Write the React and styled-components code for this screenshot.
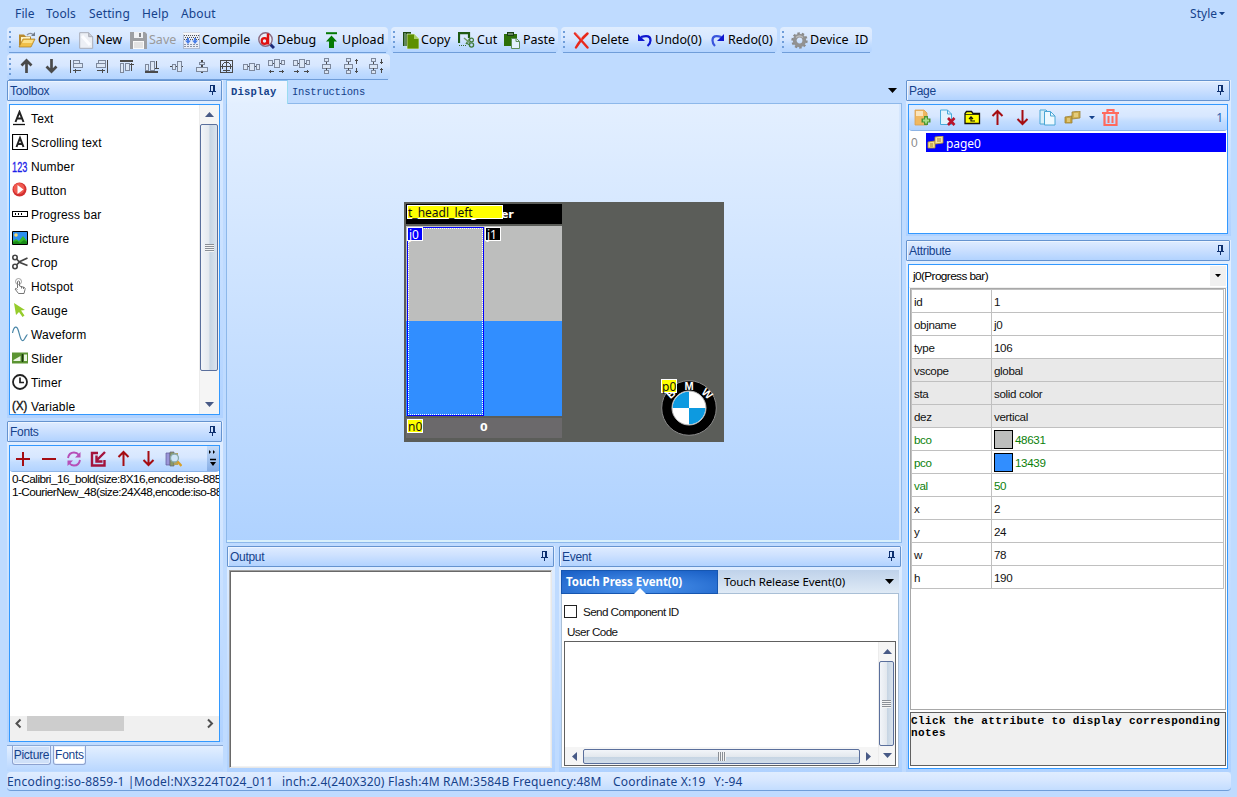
import React from "react";
import styled, { createGlobalStyle } from "styled-components";

const Global = createGlobalStyle`
  * { box-sizing: border-box; }
  body { margin: 0; background: #bfdbff; overflow: hidden; }
  svg { display: block; flex: none; }
`;

const UI = `"Noto Sans", "Open Sans", sans-serif`;
const SANS = `"Liberation Sans", Arial, sans-serif`;
const MONO = `"Liberation Mono", "Courier New", monospace`;
const strip = "linear-gradient(#e0edff, #d7e7ff 45%, #c3ddff 65%, #b2d3ff)";

/* ---------- frame ---------- */
const Window = styled.div`
  width: 1237px; height: 797px; background: #bfdbff;
  display: flex; flex-direction: column; white-space: nowrap;
`;
const MenuBar = styled.div`
  height: 27px; padding: 0 12px 0 15px; display: flex; align-items: center;
  font: 12px/27px ${UI}; color: #15428b; letter-spacing: 0.15px;
`;
const MenuItem = styled.span`width: ${(p) => p.$w}px;`;
const StyleMenu = styled.span`margin-left: auto; display: flex; align-items: center; gap: 2px; letter-spacing: 0;`;
const BarRow = styled.div`height: ${(p) => p.$h}px; display: flex; padding-left: 7px; gap: 3px;`;
const Bar = styled.div`
  width: ${(p) => p.$w}px; height: 26px; border-radius: 4px; background: ${strip};
  display: flex; align-items: center; padding-left: 2px; position: relative;
  &::after { content: ""; position: absolute; left: 2px; right: 2px; bottom: 0; height: 1px; background: #6f9dd9; }
`;
const Grip = styled.i`
  width: 2px; height: 18px; margin-right: ${(p) => p.$after}px; flex: none;
  background: repeating-linear-gradient(#6f9dd9 0 2px, transparent 2px 5px);
`;
const Tool = styled.div`
  width: ${(p) => p.$w}px; flex: none; display: flex; align-items: center; height: 24px;
  font: 12.5px/24px ${UI}; color: ${(p) => (p.$off ? "#9a9a9a" : "#000")};
`;
const IconSlot = styled.span`width: ${(p) => p.$w}px; flex: none;`;
const AlignCell = styled.span`width: 25px; flex: none; display: flex; justify-content: center; margin-bottom: 2px;`;

const Main = styled.div`height: 692px; display: flex; padding-left: 7px;`;
const Column = styled.div`
  width: ${(p) => p.$w}px; margin-right: ${(p) => p.$mr || 0}px; flex: none;
  display: flex; flex-direction: column;
`;
const Panel = styled.section`
  height: ${(p) => p.$h}px; margin-bottom: ${(p) => p.$mb || 0}px; flex: none; width: ${(p) => (p.$w ? p.$w + "px" : "auto")};
  background: linear-gradient(#e3efff, #b0d2ff); display: flex; flex-direction: column;
`;
const Header = styled.header`
  height: 21px; margin-right: 1px; flex: none; border: 1px solid #6593cf; border-radius: 1px;
  background: linear-gradient(#dfecff, #cfe2ff 40%, #b2d3ff); box-shadow: inset 1px 1px #eef5ff;
  display: flex; align-items: center; justify-content: space-between; padding: 2px 4px 0 2px;
  font: 12px/17px ${SANS}; color: #15428b; letter-spacing: -0.3px;
`;
const PinSlot = styled.span`margin-bottom: 3px;`;
const Frame = styled.div`
  margin: 3px 3px 0 2px; height: ${(p) => p.$h}px; flex: none;
  border: 1px solid #3399ff; background: #fff; display: flex; flex-direction: ${(p) => (p.$row ? "row" : "column")};
  overflow: hidden;
`;

/* ---------- toolbox ---------- */
const ToolList = styled.div`flex: 1; padding: 2px 0 0 2px; overflow: hidden;`;
const ToolEntry = styled.div`
  height: 24px; display: flex; align-items: center; gap: 3px; font: 12px/24px ${SANS}; color: #000; letter-spacing: 0.14px;
`;
const EntryIcon = styled.span`width: 16px; margin-bottom: 3px;`;

/* ---------- scrollbars ---------- */
const VScroll = styled.div`
  width: ${(p) => p.$w}px; flex: none; background: #f5f5f5; border-left: 1px solid #ececec;
  display: flex; flex-direction: column; padding-bottom: 7px;
`;
const UpSlot = styled.span`height: 19px; flex: none; display: flex; justify-content: center; padding-top: 7px;`;
const DownSlot = styled.span`margin-top: auto; display: flex; justify-content: center;`;
const VThumb = styled.div`
  margin-right: 1px; height: ${(p) => p.$h}px; border: 1px solid #5a6f9c; border-radius: 2px; flex: none;
  background: linear-gradient(90deg, #f2f5f9, #e3e8ee 52%, #c5d4e3 54%, #dbe4ee);
  display: flex; align-items: center; justify-content: center;
`;
const HScroll = styled.div`
  height: 18px; flex: none; background: #f5f5f5; display: flex; align-items: center; gap: 6px; padding-left: 7px;
`;
const HThumb = styled.div`
  width: 277px; height: 15px; border: 1px solid #5a6f9c; border-radius: 2px;
  background: linear-gradient(#f2f5f9, #e3e8ee 52%, #c5d4e3 54%, #d3deea);
  display: flex; align-items: center; justify-content: center;
`;
const Lines = styled.i`
  width: ${(p) => (p.$v ? 8 : 9)}px; height: ${(p) => (p.$v ? 9 : 8)}px;
  background: repeating-linear-gradient(${(p) => (p.$v ? "90deg" : "180deg")}, #8a8f96 0 1px, #f4f4f4 1px 2px);
`;

/* ---------- fonts ---------- */
const PanelBar = styled.div`
  height: 26px; flex: none; background: ${strip}; border-bottom: 1px solid #8db4e6; display: flex; align-items: center;
  padding-left: ${(p) => p.$pl || 0}px; border-radius: 0 0 3px 3px;
`;
const Cell = styled.span`width: ${(p) => p.$w || 25}px; flex: none; display: flex; justify-content: center;`;
const Overflow = styled.span`
  margin-left: auto; width: 12px; height: 25px; background: linear-gradient(#c6dcf8, #86aee6); display: flex; align-items: center; justify-content: center;
`;
const FontList = styled.div`
  flex: 1; padding: 1px 0 0 2px; font: 11.8px/13px ${SANS}; letter-spacing: -0.56px; color: #000; overflow: hidden;
`;
const FlatScroll = styled.div`height: 25px; flex: none; background: #f0f0f0; display: flex; padding: 0 4px;`;
const FlatThumb = styled.div`width: 97px; height: 15px; background: #cdcdcd; margin: 0 82px 0 5px;`;
const TabStrip = styled.div`
  height: 26px; border-top: 1px solid #8aa9d6; background: linear-gradient(#e3efff, #b9d7ff); display: flex; gap: 2px; padding-left: 5px; margin-top: 3px;
`;
const BottomTab = styled.div`
  width: ${(p) => p.$w}px; height: 19px; border: 1px solid #8da2cf; border-top: 0; border-radius: 0 0 3px 3px; box-shadow: inset 0 0 0 1px #e6f0ff;
  background: ${(p) => (p.$on ? "#fff" : "#cfe0f8")}; font: 12px/19px ${SANS}; color: #15428b; text-align: center; letter-spacing: -0.25px;
`;

/* ---------- document ---------- */
const DocTabs = styled.div`height: 24px; flex: none; display: flex; align-items: stretch; font: 10.5px/22px ${MONO}; color: #15428b;`;
const DocTab = styled.div`
  border-left: 1px solid #8cc0f0; border-top: 1px solid #8cc0f0; border-right: 1px solid #9adcf0;
  width: 62px; padding-left: 4px; font-weight: 700; letter-spacing: 0.2px; background: linear-gradient(#f0f6ff, #e3efff);
`;
const DocTabIdle = styled.div`
  flex: 1; padding: 1px 5px 0 4px; border-bottom: 1px solid #8db8ea; letter-spacing: -0.22px; display: flex; justify-content: space-between; line-height: 23px;
`;
const DropMark = styled.span`align-self: center; margin-top: -3px;`;
const Doc = styled.div`
  height: 439px; width: 676px; flex: none; border: 1px solid #8db8ea; border-top: 0; box-shadow: inset 0 -2px #d9f0fb, inset -2px 0 #d5e6fd;
  background: linear-gradient(#e3efff, #afd2ff); padding: 98px 0 0 177px;
`;
const Screen = styled.div`position: relative; width: 320px; height: 240px; background: #5b5d59; overflow: hidden;`;
const Part = styled.div`
  position: absolute; left: ${(p) => p.$x}px; top: ${(p) => p.$y}px; width: ${(p) => p.$w}px; height: ${(p) => p.$h}px; background: ${(p) => p.$bg};
`;
const Value = styled(Part)`
  font: 700 11px/${(p) => p.$h}px "DejaVu Sans", sans-serif; color: #fff; letter-spacing: -0.25px; padding-left: ${(p) => p.$pl}px;
`;
const Tag = styled(Part)`
  border: 1px solid #fff; color: ${(p) => p.$c || "#111"}; font: 12px/13px ${UI}; letter-spacing: 0; padding-left: ${(p) => p.$pl || 0}px;
`;
const Selection = styled(Part)`
  border: 1px solid #0000ff;
  &::after { content: ""; position: absolute; inset: 0; border: 1px dotted #fff; }
`;
const Logo = styled.div`position: absolute; left: 257px; top: 177px;`;

/* ---------- output and events ---------- */
const BottomRow = styled.div`display: flex; gap: 4px; margin-top: 3px; padding-left: 1px; height: 226px;`;
const OutputBox = styled.div`
  margin: 3px 3px 0 2px; height: 198px; background: #fff; border: 1px solid; border-color: #a0a0a0 #e8e8e8 #e8e8e8 #a0a0a0;
  box-shadow: inset 1px 1px #696969, inset -1px -1px #f2f2f2;
`;
const EventBox = styled.div`margin: 3px 3px 0 2px; height: 198px; display: flex; flex-direction: column;`;
const EventTabs = styled.div`
  height: 24px; flex: none; display: flex; background: linear-gradient(#bfd2ea, #dfeaf6); border-bottom: 1px solid #a9bfd6; font: 11.5px/24px ${UI};
  color: #000; letter-spacing: -0.1px;
`;
const EventTab = styled.div`
  width: 157px; height: 24px; background: radial-gradient(ellipse 70% 90% at 50% 75%, #4f97ef, #1c62c8); border: 1px solid #1656b0;
  font-weight: 700; line-height: 22px; color: #fff; padding-left: 4px; letter-spacing: -0.05px; position: relative;
  &::after { content: ""; position: absolute; left: 72px; bottom: -1px; border: 6px solid transparent; border-bottom-color: #fff; border-top: 0; }
`;
const EventTabIdle = styled.div`flex: 1; padding: 0 5px 0 6px; display: flex; justify-content: space-between; align-items: center;`;
const EventBody = styled.div`
  flex: 1; background: #fff; border: 1px solid #a9bfd6; border-top: 0; padding: 8px 2px 0 2px; font: 11.7px/17px ${SANS}; color: #111; letter-spacing: -0.6px;
`;
const CheckLine = styled.label`display: flex; align-items: center; height: 18px; gap: 6px;`;
const Check = styled.i`width: 13px; height: 13px; border: 1px solid #222; background: #fff;`;
const CodeLabel = styled.div`height: 21px; padding: 3px 0 0 3px;`;
const CodeBox = styled.div`width: 332px; height: 125px; border: 1px solid #606060; display: flex; background: #fff;`;
const CodeMain = styled.div`flex: 1; min-width: 0; display: flex; flex-direction: column; justify-content: flex-end;`;

/* ---------- page ---------- */
const Count = styled.span`margin-left: auto; padding-right: 4px; font: 12px ${UI}; color: #2d62b0;`;
const PageRow = styled.div`
  height: 19px; margin: 2px 1px 0 0; flex: none; display: flex; align-items: center; font: 12px/21px ${SANS}; color: #8a8a8a;
`;
const PageIndex = styled.span`width: 17px; padding: 2px 0 0 2px;`;
const PageName = styled.span`
  flex: 1; height: 19px; background: #0000ff; color: #fff; display: flex; align-items: center; gap: 2px; padding-left: 1px; font: 12px/19px ${UI};
`;
const PageText = styled.span`padding-top: 2px; letter-spacing: -0.05px;`;

/* ---------- attributes ---------- */
const Combo = styled.div`
  height: 23px; flex: none; display: flex; justify-content: space-between; padding: 1px 1px 2px 4px; font: 11.8px/21px ${SANS}; letter-spacing: -0.6px; color: #000;
  border-bottom: 1px solid #f0f0f0;
`;
const ComboButton = styled.span`width: 16px; height: 20px; background: #f0f0f0; display: flex; align-items: center; justify-content: center;`;
const Sheet = styled.div`height: 422px; flex: none; margin: 0 1px; border: 1px solid #a8a8a8; background: #fff;`;
const Grid = styled.div`width: 313px; border: 1px solid #c0c0c0; border-bottom: 0;`;
const AttrRow = styled.div`
  height: 23px; display: grid; grid-template-columns: 80px 1fr; border-bottom: 1px solid #c0c0c0;
  background: ${(p) => (p.$kind === "fixed" ? "#e9e9e9" : "#fff")}; color: ${(p) => (p.$kind === "live" ? "#0b7f0b" : "#111")};
  font: 11.6px/23px ${SANS}; letter-spacing: -0.35px;
`;
const Key = styled.div`padding-left: 2px; border-right: 1px solid #c0c0c0;`;
const Val = styled.div`padding-left: 2px; display: flex; align-items: center; gap: 2px;`;
const Swatch = styled.i`width: 19px; height: 19px; border: 1px solid #000; background: ${(p) => p.$c};`;
const Note = styled.div`
  margin: 2px 1px 0; height: 54px; border: 1px solid #606060; background: #f0f0f0; font: 700 11px/12px ${MONO}; letter-spacing: 0.43px;
  color: #000; padding: 2px 0 0 0; white-space: normal;
`;
const Status = styled.footer`
  margin: 0 6px 0 7px; height: 19px; border-radius: 4px; background: linear-gradient(#e0edff, #d7e7ff 45%, #c3ddff); border-bottom: 1px solid #6f9dd9;
  font: 12px/19px ${UI}; color: #15428b; display: flex; letter-spacing: 0.2px;
`;
const StatusPart = styled.span`width: ${(p) => p.$w}px;`;

/* ---------- drawings ---------- */
const Ico = ({ w = 16, h = 16, children, ...r }) => (
  <svg width={w} height={h} viewBox={`0 0 ${w} ${h}`} fill="none" {...r}>{children}</svg>
);
const Pin = () => (
  <PinSlot>
    <Ico w={8} h={10} shapeRendering="crispEdges"><path d="M1 0h5v6h-5zM2 1v5h2V1zM0 6h7v1H0zM3 7h1v3H3z" fill="#0d2f6e" fillRule="evenodd" /></Ico>
  </PinSlot>
);
const Tri = ({ d = "down", c = "#485a86", s = 9 }) => {
  const p = { down: "M0 0h9L4.5 5z", up: "M0 5h9L4.5 0z", left: "M5 0v9L0 4.5z", right: "M0 0v9L5 4.5z" }[d];
  const v = d === "left" || d === "right";
  return <svg width={v ? (s * 5) / 9 : s} height={v ? s : (s * 5) / 9} viewBox={v ? "0 0 5 9" : "0 0 9 5"}><path d={p} fill={c} /></svg>;
};
const OpenIcon = () => (
  <Ico w={18}>
    <path d="M1 2.500h5l2 2h5v9H1z" fill="#b98a2e" /><path d="M3 5h9v8H3z" fill="#fff3c4" />
    <path d="M5 7h12l-4 8H1z" fill="#f0bf48" stroke="#a87a20" strokeWidth=".7" /><path d="M6 8h9.500l-1.500 3H4z" fill="#fbe08a" />
    <path d="M9 3q3-3 6-.500" stroke="#8890a0" strokeWidth="1.400" /><path d="M13 4h4V0z" fill="#707a88" />
  </Ico>
);
const NewIcon = () => (
  <Ico w={15} h={17}><path d="M.7.7h9l4 4v11.600H.7z" fill="#eceff5" stroke="#a9adb8" /><path d="M9.700.7v4h4" fill="#c8ccd5" stroke="#a9adb8" /><path d="M3 4l8 9" stroke="#fbfcff" strokeWidth="3" /></Ico>
);
const SaveIcon = () => (
  <Ico w={17} h={17}><path d="M0 0h15l2 2v15H0z" fill="#9d9fa3" /><path d="M4 0h9v6H4z" fill="#f0f2f5" /><path d="M9 1h2v4H9z" fill="#85878b" /><path d="M3 9h11v8H3z" fill="#fafafa" /><path d="M4 11h9M4 13h9M4 15h9" stroke="#ccc" /></Ico>
);
const CompileIcon = () => (
  <Ico w={17} h={17}>
    <path d="M.5.5h16v16H.5z" fill="#e9eef8" stroke="#8a93a8" strokeDasharray="1 1" /><path d="M0 1.500h17" stroke="#f8f8f8" strokeWidth="2" />
    <path d="M1 3.500h15M2 5.500h13M1 7.500h15" stroke="#555" strokeDasharray="1 1" /><path d="M1 12.500h15M1 14.500h15" stroke="#8a93a8" strokeDasharray="2 1" />
    <path d="M4 6h2v2.500h2L5 12 2 8.500h2zM11 6h2v2.500h2L12 12 9 8.500h2z" fill="#4a7ee8" />
  </Ico>
);
const DebugIcon = () => (
  <Ico w={17} h={17}>
    <path d="M11 11l5 5" stroke="#1c2a78" strokeWidth="3" /><circle cx="7.500" cy="7.500" r="6.700" fill="#e8eef8" stroke="#8a6a80" strokeWidth="1.400" />
    <circle cx="6.500" cy="9" r="2.800" stroke="#e01010" strokeWidth="2.200" /><path d="M10 1.500v11" stroke="#e01010" strokeWidth="2.500" />
  </Ico>
);
const UploadIcon = () => (
  <Ico w={13} h={17}><path d="M1 1.200h11" stroke="#067a06" strokeWidth="2" /><path d="M6.500 3.500L12 9.500H9v6.500H4V9.500H1z" fill="#067a06" /></Ico>
);
const CopyIcon = () => (
  <Ico w={16} h={17}><path d="M0 0h8v14H0z" fill="#1f4a12" /><path d="M2 1v13" stroke="#dfe" strokeWidth=".7" /><path d="M4 2h7l5 5v10H4z" fill="#5d9000" stroke="#e8f4d8" strokeWidth=".7" /><path d="M11 2v5h5z" fill="#a9cf6b" /></Ico>
);
const CutIcon = () => (
  <Ico w={17} h={17}>
    <path d="M1 11V1.200h10V6" stroke="#1f5a12" strokeWidth="2.200" /><path d="M1 13.500h7" stroke="#3a6a30" strokeDasharray="1 1" />
    <path d="M6 6l6 5M12 6l-4 6" stroke="#6f9a66" strokeWidth="1.500" /><circle cx="13.500" cy="8" r="1.900" stroke="#3f7a38" strokeWidth="1.200" /><circle cx="13.500" cy="13" r="2.100" stroke="#3f7a38" strokeWidth="1.300" /><path d="M8 11l4 2" stroke="#3f7a38" strokeWidth="1.300" />
  </Ico>
);
const PasteIcon = () => (
  <Ico w={16} h={17}><path d="M0 2h13v12H0z" fill="#2d7008" /><path d="M3 0h7v4H3z" fill="#1a3f14" /><path d="M4 2h5" stroke="#b9d0b0" /><path d="M7.500 6.500h5l3 3v7h-8z" fill="#e4f2fc" stroke="#5f8f5a" /><path d="M12 6.500v3h3.500" stroke="#5f8f5a" /></Ico>
);
const DeleteIcon = () => (
  <Ico w={16} h={17}><path d="M2 1.500Q8 8 14.500 15.500M14.500 1.500Q8 7 3 15.500" stroke="#e8291c" strokeWidth="2.400" strokeLinecap="round" /><path d="M3 1.500q4 4 6 6" stroke="#f88" strokeWidth=".8" /></Ico>
);
const UndoIcon = () => (
  <Ico w={14} h={15}><path d="M3 4q9.500-3 9.500 3.500 0 3-3 5.500" stroke="#1018d0" strokeWidth="2.200" /><path d="M0 1v7h7z" fill="#1018d0" /></Ico>
);
const RedoIcon = () => (
  <Ico w={14} h={15}><path d="M10.500 4q-9-3-9 3.500 0 3 2.500 5.500" stroke="#3a55dd" strokeWidth="2.200" /><path d="M13 1v7H6z" fill="#1018d0" /></Ico>
);
const GearIcon = () => (
  <Ico w={17} h={17}><circle cx="8.500" cy="8.500" r="4.800" stroke="#929292" strokeWidth="3.800" /><circle cx="8.500" cy="8.500" r="7.200" stroke="#8a8a8a" strokeWidth="2" strokeDasharray="2.500 2" /><path d="M5 5.500q3.500-3 7 0" stroke="#bbb" strokeWidth="1.500" /></Ico>
);

const A = "#4a4a4a";
const box = (x, y, w, h) => <rect key={`${x}-${y}`} x={x + 0.5} y={y + 0.5} width={w - 1} height={h - 1} fill="#dce7f6" stroke="#7d889c" />;
const UpDark = () => <Ico w={17}><path d="M8.500 15V4M3.500 7.500l5-5 5 5" stroke={A} strokeWidth="2.700" /></Ico>;
const DownDark = () => <Ico w={17}><path d="M8.500 1v11M3.500 8.500l5 5 5-5" stroke={A} strokeWidth="2.700" /></Ico>;
const alignIcons = [
  <UpDark />, <DownDark />,
  <><path d="M2.500 2v13M5 12.500h8M7.500 10.500v4" stroke={A} />{box(5, 2, 7, 4)}{box(5, 5, 10, 5)}</>,
  <><path d="M14.500 2v13M4 12.500h8M9.500 10.500v4" stroke={A} />{box(5, 2, 8, 4)}{box(3, 5, 10, 5)}</>,
  <><path d="M2 3h13" stroke={A} strokeWidth="2" /><path d="M13.500 5v8M11.500 6.500h4" stroke={A} />{box(2, 5, 4, 10)}{box(7, 5, 5, 8)}</>,
  <><path d="M2 14h13" stroke={A} strokeWidth="2" /><path d="M13.500 3v8M11.500 10.500h4" stroke={A} />{box(2, 6, 4, 7)}{box(7, 3, 5, 10)}</>,
  <><path d="M2 8.500h13" stroke={A} strokeWidth="1.400" />{box(4, 6, 4, 6)}{box(9, 3, 5, 11)}</>,
  <><path d="M8.500 2v13" stroke={A} strokeWidth="2" />{box(6, 4, 6, 3)}{box(3, 9, 12, 5)}</>,
  <><path d="M2.500 2.500h12v12h-12zM2 8.500h13M8.500 2v13" stroke={A} /><path d="M6 4.500h5M4.500 6v5M12.500 6v5M6 12.500h5M5 5h1M11 5h1M5 12h1M11 12h1" stroke={A} /></>,
  <>{box(0, 6, 5, 6)}{box(6, 5, 6, 8)}{box(13, 6, 4, 6)}<path d="M5 8.500h1M12 8.500h1" stroke={A} /></>,
  <>{box(0, 2, 5, 6)}{box(6, 1, 6, 9)}{box(13, 2, 4, 5)}<path d="M5 5.500h1M12 5.500h1M1 13.500h5M11 13.500h5M2.500 12v3M14.500 12v3" stroke={A} /></>,
  <>{box(0, 2, 5, 6)}{box(6, 1, 6, 9)}{box(13, 2, 4, 5)}<path d="M5 5.500h1M12 5.500h1M1 13.500h5M11 13.500h5M4.500 12v3M14.500 12v3" stroke={A} /></>,
  <>{box(6, 0, 5, 4)}{box(4, 6, 9, 5)}{box(6, 12, 5, 4)}<path d="M8.500 4v2M8.500 10v2" stroke={A} /></>,
  <>{box(3, 0, 5, 4)}{box(1, 6, 9, 5)}{box(3, 12, 5, 4)}<path d="M5.500 4v2M5.500 10v2M13.500 1v5M12 2.500h3M13.500 10v5M12 13.500h3" stroke={A} /></>,
  <>{box(3, 0, 5, 4)}{box(1, 6, 9, 5)}{box(3, 12, 5, 4)}<path d="M5.500 4v2M5.500 10v2M13.500 1v5M12 4.500h3M13.500 10v5M12 11.500h3" stroke={A} /></>,
];

const toolbox = [
  ["Text", <Ico><path d="M3.500 12L7.500 2l4 10M5 8.500h5" stroke="#222" strokeWidth="2" /><path d="M1 14.500h12" stroke="#111" strokeWidth="1.300" /></Ico>],
  ["Scrolling text", <Ico><path d="M.5.5h15v15H.5z" stroke="#000" strokeWidth="1.200" /><path d="M4.500 13L8 4l3.500 9M5.500 10h5" stroke="#222" strokeWidth="2" /></Ico>],
  ["Number", <Ico><text x="0" y="13.500" fontSize="15.500" fill="#1a20e8" stroke="#1a20e8" strokeWidth=".3" textLength="15.500" lengthAdjust="spacingAndGlyphs" fontFamily="Liberation Sans, sans-serif">123</text></Ico>],
  ["Button", <Ico><circle cx="7.500" cy="7.500" r="7" fill="#d33030" /><circle cx="7" cy="6.500" r="5.500" fill="#f05a50" /><path d="M5.500 3v9l6-4.500z" fill="#fff" /></Ico>],
  ["Progress bar", <Ico shapeRendering="crispEdges"><path d="M.5 5.500h15v5H.5z" stroke="#000" /><path d="M3 8h7" stroke="#000" strokeWidth="2" strokeDasharray="1 2" /></Ico>],
  ["Picture", <Ico><path d="M.5 1.500h15v13H.5z" fill="#2c8ef0" stroke="#000" /><circle cx="4" cy="5" r="1.800" fill="#f8d870" /><path d="M1 14v-3l3-2 3 2 4-5 4 5v3z" fill="#35b828" /><path d="M1 14v-2l4-1 3 2 4-3 3 2v2z" fill="#188a18" /></Ico>],
  ["Crop", <Ico><circle cx="3" cy="3.500" r="2.200" stroke="#444" strokeWidth="1.600" /><circle cx="3" cy="12.500" r="2.200" stroke="#444" strokeWidth="1.600" /><path d="M4.500 5l3.500 3.500 7.500 3M4.500 11L8 7.500l7.500-3.500" stroke="#444" strokeWidth="1.700" /></Ico>],
  ["Hotspot", <Ico><path d="M5.500 10V3.500q1-1 2 0V8l5 1.500q1 .5.500 2L12 15.500H6.500L3 11q.5-1.500 2.500.5M9.500 8.500v2M11.500 9v2" stroke="#666" strokeWidth=".9" /><circle cx="6.500" cy="3.500" r="3" stroke="#888" strokeWidth=".8" /></Ico>],
  ["Gauge", <Ico><path d="M2 1l11 7-4 .5 3.500 5-2 1.500-3.500-5-3 3z" fill="#96cc2c" /></Ico>],
  ["Waveform", <Ico><path d="M.5 7C2-.5 5-.5 6.500 5s3 13 6 8 2.500-4.500 3-4.500" stroke="#4b87a8" strokeWidth="1.200" /></Ico>],
  ["Slider", <Ico><path d="M0 2.500h16v11H0z" fill="#5b9432" /><path d="M1.500 10l7-4v5h-7zM12 4.500h3v6.500h-3z" fill="#e9f5e0" /><path d="M10.500 4v8" stroke="#1c3a10" strokeWidth="1.500" /></Ico>],
  ["Timer", <Ico><circle cx="8" cy="8" r="7" stroke="#222" strokeWidth="1.800" /><path d="M8 3.500V8.500h4" stroke="#222" strokeWidth="1.700" /></Ico>],
  ["Variable", <Ico><text x="0" y="12" fontSize="13.500" fill="#111" stroke="#111" strokeWidth=".4" textLength="15.500" lengthAdjust="spacingAndGlyphs" fontFamily="Liberation Sans, sans-serif">(X)</text></Ico>],
];

const R = "#a50d12";
const ArrowUp = () => <Ico w={13} h={17}><path d="M6.500 16V2.500M1.500 7l5-5 5 5" stroke={R} strokeWidth="2" /></Ico>;
const ArrowDown = () => <Ico w={13} h={17}><path d="M6.500 1v13.500M1.500 10l5 5 5-5" stroke={R} strokeWidth="2" /></Ico>;
const fontTools = [
  <Ico><path d="M8 1v14M1 8h14" stroke={R} strokeWidth="2" /></Ico>,
  <Ico><path d="M1 8h14" stroke={R} strokeWidth="2" /></Ico>,
  <Ico><path d="M2 7q1-5.500 6-5.500 3 0 5 2.500M14 9q-1 5.500-6 5.500-3 0-5-2.500" stroke="#b64fb8" strokeWidth="1.900" /><path d="M14.500 1v5.500H9zM1.500 15V9.500H7z" fill="#b64fb8" /></Ico>,
  <Ico w={17}><path d="M8 2H2v12.500h12.500V9" stroke="#a3133c" strokeWidth="2.400" /><path d="M15 1L7 9M6.500 4.500v6h6" stroke="#a3133c" strokeWidth="2.400" /></Ico>,
  <ArrowUp />, <ArrowDown />,
  <Ico w={17}><path d="M1 2h4v12H1z" fill="#9a95d8" stroke="#5f5a9a" strokeWidth=".7" /><path d="M5 1h4v14H5z" fill="#8a9a68" stroke="#667" strokeWidth=".7" /><path d="M9 2h4v12H9z" fill="#b5a25a" /><circle cx="9.500" cy="7" r="4" fill="#cfe6f8" stroke="#8aa" strokeWidth="1.300" /><path d="M12.500 10.500l4 4.500" stroke="#d8a02a" strokeWidth="2.400" /></Ico>,
];
const Chips = ({ hi }) => (
  <Ico w={17} h={13}><path d="M1 6l7-1v7H1z" fill={hi ? "#f5df8c" : "#c8a440"} stroke={hi ? "#b09030" : "#9a8038"} strokeWidth=".8" /><path d="M8 1l8-1v7L8 8z" fill={hi ? "#f8e6a0" : "#d0b050"} stroke={hi ? "#b09030" : "#9a8038"} strokeWidth=".8" /><path d="M10 3h4M10 5h4M3 8h3M3 10h3" stroke={hi ? "#a08030" : "#f8e8a8"} /></Ico>
);
const pageTools = [
  <Ico w={17} h={17}><path d="M1 1h9l3 3v12H1z" fill="#f0b860" stroke="#d8a050" strokeWidth=".8" /><path d="M2 2h7v5H2z" fill="#fae4bc" /><path d="M12 7v9M7.500 11.500h9" stroke="#4d9434" strokeWidth="4" /><path d="M12 8.500v6M9 11.500h6" stroke="#a8e088" strokeWidth="1.800" /></Ico>,
  <Ico w={17} h={17}><path d="M1.500 1h7l4 4v10.500h-11z" fill="#e2f4fd" stroke="#48aada" /><path d="M8.500 1v4h4" stroke="#48aada" /><path d="M9 9l6.500 7M15.500 9L9 16" stroke="#b8142c" strokeWidth="2.600" /></Ico>,
  <Ico w={17} h={17}><path d="M1 14.500V4.500l1.500-2h5L9 4.500h6.500v10z" fill="#ffff00" stroke="#111" strokeWidth="1.300" /><path d="M1 5.500h14" stroke="#111" strokeWidth=".8" /><path d="M7 8v4h4M5 10l2-2.200L9 10" stroke="#111" strokeWidth="1.200" /></Ico>,
  <ArrowUp />, <ArrowDown />,
  <Ico w={17} h={17}><path d="M1 1h6l3 3v11H1z" fill="#d8f0fb" stroke="#4aa6d4" /><path d="M5.500 2.500h6l4.500 4.500v9H5.500z" fill="#edf9ff" stroke="#4aa6d4" /><path d="M11.500 2.500v4.500H16" stroke="#4aa6d4" /></Ico>,
  <Chips />,
];
const TrashIcon = () => (
  <Ico w={17} h={17}><path d="M0 4h17M5.500 4V1h6v3" stroke="#ff6a5e" strokeWidth="2.200" /><path d="M2.500 5v11h12V5" stroke="#ff6a5e" strokeWidth="2.200" /><path d="M6.500 7v7M10.500 7v7" stroke="#ff6a5e" strokeWidth="2" /></Ico>
);
const Emblem = () => (
  <svg width="56" height="58" viewBox="0 0 56 58">
    <circle cx="28" cy="29" r="27.300" fill="#000" stroke="#8a8a8a" strokeWidth="1" />
    <circle cx="28" cy="29" r="17" fill="#fff" stroke="#b8b8b8" strokeWidth="1" />
    <path d="M28 29V12.700A16.300 16.300 0 0 0 11.700 29zM28 29v16.300A16.300 16.300 0 0 0 44.300 29z" fill="#0d9ae0" />
    <g fill="#fff" fontFamily="Liberation Sans, sans-serif" fontWeight="700" fontSize="11" textAnchor="middle">
      <text x="28" y="11">M</text>
      <text x="0" y="0" transform="translate(12.500 17.500) rotate(-42)">B</text>
      <text x="0" y="0" transform="translate(43.500 17.500) rotate(42)">W</text>
    </g>
  </svg>
);

const attributes = [
  ["id", "1"], ["objname", "j0"], ["type", "106"],
  ["vscope", "global", "fixed"], ["sta", "solid color", "fixed"], ["dez", "vertical", "fixed"],
  ["bco", "48631", "live", "#bdbebd"], ["pco", "13439", "live", "#318eff"], ["val", "50", "live"],
  ["x", "2"], ["y", "24"], ["w", "78"], ["h", "190"],
];
const menu = [["File", 31], ["Tools", 43], ["Setting", 53], ["Help", 39], ["About", 50]];
const bars = [
  [381, 7, [["Open", OpenIcon, 20, 61], ["New", NewIcon, 17, 51], ["Save", SaveIcon, 19, 53, true], ["Compile", CompileIcon, 19, 75], ["Debug", DebugIcon, 19, 67], ["Upload", UploadIcon, 17, 60]]],
  [167, 8, [["Copy", CopyIcon, 18, 55], ["Cut", CutIcon, 19, 46], ["Paste", PasteIcon, 19, 50]]],
  [216, 8, [["Delete", DeleteIcon, 18, 65], ["Undo(0)", UndoIcon, 17, 73], ["Redo(0)", RedoIcon, 17, 62]]],
  [92, 7, [["Device", GearIcon, 19, 64], ["ID", null, 0, 14]]],
];

const PanelHeader = ({ children }) => <Header><span>{children}</span><Pin /></Header>;

export default function App() {
  return (
    <>
      <Global />
      <Window>
        <MenuBar>
          {menu.map(([t, w]) => <MenuItem key={t} $w={w}>{t}</MenuItem>)}
          <StyleMenu>Style<Tri c="#15428b" s={6} /></StyleMenu>
        </MenuBar>
        <BarRow $h={27}>
          {bars.map(([w, after, items], i) => (
            <Bar key={i} $w={w}>
              <Grip $after={after} />
              {items.map(([t, Icon, iw, tw, off]) => (
                <Tool key={t} $w={tw} $off={off}><IconSlot $w={iw}>{Icon && <Icon />}</IconSlot>{t}</Tool>
              ))}
            </Bar>
          ))}
        </BarRow>
        <BarRow $h={26}>
          <Bar $w={383}>
            <Grip $after={3} />
            {alignIcons.map((d, i) => <AlignCell key={i}>{i < 2 ? d : <Ico w={17} shapeRendering="crispEdges">{d}</Ico>}</AlignCell>)}
          </Bar>
        </BarRow>

        <Main>
          <Column $w={216} $mr={3}>
            <Panel $h={338} $mb={3}>
              <PanelHeader>Toolbox</PanelHeader>
              <Frame $h={311} $row>
                <ToolList>
                  {toolbox.map(([t, icon]) => <ToolEntry key={t}><EntryIcon>{icon}</EntryIcon>{t}</ToolEntry>)}
                </ToolList>
                <VScroll $w={20}>
                  <UpSlot><Tri d="up" /></UpSlot>
                  <VThumb $h={247}><Lines /></VThumb>
                  <DownSlot><Tri /></DownSlot>
                </VScroll>
              </Frame>
            </Panel>
            <Panel $h={321}>
              <PanelHeader>Fonts</PanelHeader>
              <Frame $h={297}>
                <PanelBar>
                  {fontTools.map((ic, i) => <Cell key={i} $w={i === 0 ? 26 : 25}>{ic}</Cell>)}
                  <Overflow>
                    <Ico w={8} h={17}><path d="M0 0l2 2-2 2zM4 0l2 2-2 2z" fill="#000" /><path d="M1 9.500h6" stroke="#000" strokeWidth="1.500" /><path d="M1 12h6l-3 4z" fill="#000" /></Ico>
                  </Overflow>
                </PanelBar>
                <FontList>
                  <div>0-Calibri_16_bold(size:8X16,encode:iso-8859-1)</div>
                  <div>1-CourierNew_48(size:24X48,encode:iso-8859-1)</div>
                </FontList>
                <FlatScroll>
                  <Ico w={8} h={15}><path d="M6.500 3.500l-4 4 4 4" stroke="#505050" strokeWidth="2" /></Ico>
                  <FlatThumb />
                  <Ico w={8} h={15}><path d="M2 3.500l4 4-4 4" stroke="#505050" strokeWidth="2" /></Ico>
                </FlatScroll>
              </Frame>
            </Panel>
            <TabStrip>
              <BottomTab $w={39}>Picture</BottomTab>
              <BottomTab $w={33} $on>Fonts</BottomTab>
            </TabStrip>
          </Column>

          <Column $w={676} $mr={4}>
            <DocTabs>
              <DocTab>Display</DocTab>
              <DocTabIdle>Instructions<DropMark><Tri c="#000" /></DropMark></DocTabIdle>
            </DocTabs>
            <Doc>
              <Screen>
                <Value $x={2} $y={2} $w={156} $h={21} $bg="#000" $pl={64}>gmeter</Value>
                <Part $x={2} $y={22} $w={156} $h={2} $bg="#5b5d59" />
                <Part $x={2} $y={24} $w={156} $h={95} $bg="#bdbebd" />
                <Part $x={2} $y={119} $w={156} $h={95} $bg="#318eff" />
                <Value $x={2} $y={216} $w={156} $h={20} $bg="#6b696b" $pl={74}>0</Value>
                <Selection $x={3} $y={25} $w={77} $h={189} $bg="transparent" />
                <Tag $x={3} $y={3} $w={96} $h={14} $bg="#ffff00">t_headl_left</Tag>
                <Tag $x={3} $y={25} $w={16} $h={14} $bg="#0000ff" $c="#fff" $pl={1}>j0</Tag>
                <Tag $x={81} $y={25} $w={16} $h={14} $bg="#000" $c="#fff" $pl={1}>j1</Tag>
                <Tag $x={3} $y={217} $w={16} $h={14} $bg="#ffff00">n0</Tag>
                <Logo><Emblem /></Logo>
                <Tag $x={257} $y={177} $w={16} $h={14} $bg="#ffff00">p0</Tag>
              </Screen>
            </Doc>
            <BottomRow>
              <Panel $h={226} $w={328}>
                <PanelHeader>Output</PanelHeader>
                <OutputBox />
              </Panel>
              <Panel $h={226} $w={343}>
                <PanelHeader>Event</PanelHeader>
                <EventBox>
                  <EventTabs>
                    <EventTab>Touch Press Event(0)</EventTab>
                    <EventTabIdle>Touch Release Event(0)<Tri c="#000" /></EventTabIdle>
                  </EventTabs>
                  <EventBody>
                    <CheckLine><Check />Send Component ID</CheckLine>
                    <CodeLabel>User Code</CodeLabel>
                    <CodeBox>
                      <CodeMain>
                        <HScroll><Tri d="left" /><HThumb><Lines $v /></HThumb><Tri d="right" /></HScroll>
                      </CodeMain>
                      <VScroll $w={17}>
                        <UpSlot><Tri d="up" /></UpSlot>
                        <VThumb $h={85}><Lines /></VThumb>
                        <DownSlot><Tri /></DownSlot>
                      </VScroll>
                    </CodeBox>
                  </EventBody>
                </EventBox>
              </Panel>
            </BottomRow>
          </Column>

          <Column $w={325}>
            <Panel $h={156} $mb={4}>
              <PanelHeader>Page</PanelHeader>
              <Frame $h={130}>
                <PanelBar $pl={1}>
                  {pageTools.map((ic, i) => <Cell key={i}>{ic}</Cell>)}
                  <Cell $w={13}><Tri c="#15428b" s={6} /></Cell>
                  <Cell><TrashIcon /></Cell>
                  <Count>1</Count>
                </PanelBar>
                <PageRow><PageIndex>0</PageIndex><PageName><Chips hi /><PageText>page0</PageText></PageName></PageRow>
              </Frame>
            </Panel>
            <Panel $h={532}>
              <PanelHeader>Attribute</PanelHeader>
              <Frame $h={505}>
                <Combo>j0(Progress bar)<ComboButton><Tri c="#000" s={6} /></ComboButton></Combo>
                <Sheet>
                  <Grid>
                    {attributes.map(([k, v, kind, sw]) => (
                      <AttrRow key={k} $kind={kind}><Key>{k}</Key><Val>{sw && <Swatch $c={sw} />}{v}</Val></AttrRow>
                    ))}
                  </Grid>
                </Sheet>
                <Note>Click the attribute to display corresponding notes</Note>
              </Frame>
            </Panel>
          </Column>
        </Main>

        <Status>
          <StatusPart $w={127}>Encoding:iso-8859-1 |</StatusPart>
          <StatusPart $w={148}>Model:NX3224T024_011</StatusPart>
          <StatusPart $w={331}>inch:2.4(240X320) Flash:4M RAM:3584B Frequency:48M</StatusPart>
          <StatusPart $w={101}>Coordinate X:19</StatusPart>
          <StatusPart $w={60}>Y:-94</StatusPart>
        </Status>
      </Window>
    </>
  );
}
